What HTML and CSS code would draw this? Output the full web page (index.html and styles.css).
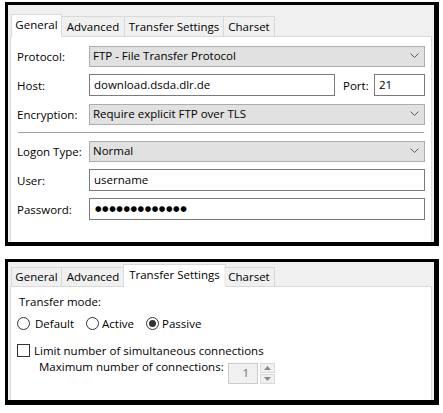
FILE: index.html
```html
<!DOCTYPE html>
<html>
<head>
<meta charset="utf-8">
<link rel="stylesheet" href="styles.css">
</head>
<body>
<div class="shot shot-top">
  <div class="tabs">
    <div class="tab sel w-gen">General</div>
    <div class="tab w-adv">Advanced</div>
    <div class="tab w-ts">Transfer Settings</div>
    <div class="tab w-cs">Charset</div>
  </div>
  <div class="panel panel-top">
    <div class="row">
      <span class="lbl">Protocol:</span>
      <div class="combo grow"><span>FTP - File Transfer Protocol</span><svg class="chev" width="9" height="5" viewBox="0 0 9 5"><path d="M0.5 0.5 L4.5 4.5 L8.5 0.5" stroke="#5a5a5a" fill="none"/></svg></div>
    </div>
    <div class="row">
      <span class="lbl">Host:</span>
      <div class="edit host">download.dsda.dlr.de</div>
      <span class="lbl port-lbl">Port:</span>
      <div class="edit port">21</div>
    </div>
    <div class="row">
      <span class="lbl">Encryption:</span>
      <div class="combo grow"><span>Require explicit FTP over TLS</span><svg class="chev" width="9" height="5" viewBox="0 0 9 5"><path d="M0.5 0.5 L4.5 4.5 L8.5 0.5" stroke="#5a5a5a" fill="none"/></svg></div>
    </div>
    <div class="sep"></div>
    <div class="row">
      <span class="lbl">Logon Type:</span>
      <div class="combo grow"><span>Normal</span><svg class="chev" width="9" height="5" viewBox="0 0 9 5"><path d="M0.5 0.5 L4.5 4.5 L8.5 0.5" stroke="#5a5a5a" fill="none"/></svg></div>
    </div>
    <div class="row">
      <span class="lbl">User:</span>
      <div class="edit grow">username</div>
    </div>
    <div class="row">
      <span class="lbl">Password:</span>
      <div class="edit grow"><span class="dots">●●●●●●●●●●●●●</span></div>
    </div>
  </div>
</div>

<div class="shot shot-bot">
  <div class="tabs">
    <div class="tab w-gen">General</div>
    <div class="tab w-adv">Advanced</div>
    <div class="tab sel w-ts">Transfer Settings</div>
    <div class="tab w-cs">Charset</div>
  </div>
  <div class="panel panel-bot">
    <div class="line mode">Transfer mode:</div>
    <div class="radios">
      <label class="radio r-def"><span class="circ"></span>Default</label>
      <label class="radio r-act"><span class="circ"></span>Active</label>
      <label class="radio r-pas"><span class="circ on"></span>Passive</label>
    </div>
    <label class="check"><span class="box"></span>Limit number of simultaneous connections</label>
    <div class="maxrow">
      <span class="maxlbl">Maximum number of connections:</span>
      <div class="spin">1</div>
      <div class="spinbtns">
        <div class="sbtn"><svg width="7" height="4" viewBox="0 0 7 4"><path d="M0 4 L3.5 0 L7 4 Z" fill="#8a8a8a"/></svg></div>
        <div class="sbtn"><svg width="7" height="4" viewBox="0 0 7 4"><path d="M0 0 L3.5 4 L7 0 Z" fill="#8a8a8a"/></svg></div>
      </div>
    </div>
  </div>
</div>
</body>
</html>
```

FILE: styles.css
```css
* { box-sizing: border-box; }
body {
  margin: 0;
  background: #fff;
  font-family: "Segoe UI", "Open Sans", "Noto Sans", sans-serif;
  font-size: 11.5px;
  color: #000;
}
.shot {
  margin-left: 5px;
  width: 434px;
  border: solid #000;
  border-width: 3px 5px 4px 3px;
  background: #f0f0f0;
  display: flex;
  flex-direction: column;
  padding: 0 2px;
}
.shot-top {
  margin-top: 2px;
  height: 244px;
  padding-top: 9px;
}
.shot-bot {
  margin-top: 13px;
  height: 146px;
  padding-top: 2px;
  border-bottom-width: 5px;
}
.tabs {
  display: flex;
  align-items: flex-end;
  height: 22px;
  padding-left: 1px;
  position: relative;
  z-index: 2;
}
.tab {
  height: 20px;
  border: 1px solid #d9d9d9;
  border-bottom: none;
  border-left: none;
  background: #f0f0f0;
  display: flex;
  align-items: center;
  justify-content: center;
  white-space: nowrap;
  padding-bottom: 1px;
}
.tab:first-child { border-left: 1px solid #d9d9d9; }
.shot-bot .tab { height: 19px; }
.tab.sel {
  background: #fff;
  height: 23px;
  margin-bottom: -1px;
  border-left: 1px solid #d9d9d9;
  padding-bottom: 3px;
}
.shot-bot .tab.sel { margin-left: -2px; margin-right: -2px; height: 23px; }
.w-gen { width: 51px; }
.w-adv { width: 63px; }
.w-ts { width: 99px; }
.w-cs { width: 51px; }
.shot-bot .w-ts { width: 103px; }
.panel {
  flex: 1;
  background: #fff;
  border: 1px solid #d9d9d9;
  border-bottom: none;
}
.panel-top {
  padding: 8px 6px 0 6px;
  display: flex;
  flex-direction: column;
  gap: 7px;
}
.row {
  display: flex;
  align-items: center;
  height: 22px;
}
.lbl { width: 72px; flex: none; }
.grow { flex: 1; }
.combo {
  height: 21px;
  background: #e1e1e1;
  border: 1px solid #adadad;
  display: flex;
  align-items: center;
  justify-content: space-between;
  padding: 0 5px 1px 3px;
}
.chev { flex: none; }
.edit {
  height: 22px;
  background: #fff;
  border: 1px solid #7a7a7a;
  display: flex;
  align-items: center;
  padding: 0 4px 1px 4px;
}
.host { width: 246px; flex: none; }
.port-lbl { width: 31px; margin-left: 8px; }
.port { width: 51px; flex: none; }
.dots {
  font-family: "DejaVu Sans", sans-serif;
  font-size: 7.5px;
  letter-spacing: 0.55px;
  padding-left: 1px;
}
.sep {
  height: 1px;
  background: #a0a0a0;
  margin: 0 1px;
}
.panel-bot {
  padding: 7px 0 0 6px;
  display: flex;
  flex-direction: column;
}
.line { height: 16px; line-height: 16px; padding-left: 2px; }
.radios {
  display: flex;
  height: 16px;
  margin-top: 5px;
  align-items: center;
}
.radio {
  display: flex;
  align-items: center;
  gap: 5px;
}
.r-def { width: 69px; }
.r-act { width: 60px; gap: 3px; }
.r-pas { gap: 3px; }
.circ {
  width: 13px;
  height: 13px;
  border: 1px solid #333;
  border-radius: 50%;
  background: #fff;
  display: flex;
  align-items: center;
  justify-content: center;
}
.circ.on::after {
  content: "";
  width: 7px;
  height: 7px;
  border-radius: 50%;
  background: #333;
}
.check {
  display: flex;
  align-items: center;
  gap: 4px;
  height: 16px;
  margin-top: 11px;
}
.box {
  width: 13px;
  height: 13px;
  border: 1px solid #333;
  background: #fff;
}
.maxrow {
  display: flex;
  align-items: flex-start;
  margin-top: 1px;
  padding-left: 22px;
}
.maxlbl { width: 189px; flex: none; line-height: 16px; white-space: nowrap; }
.spin {
  margin-top: 4px;
  width: 30px;
  height: 21px;
  border: 1px solid #cccccc;
  background: #f0f0f0;
  color: #6d6d6d;
  text-align: right;
  padding-right: 8px;
  line-height: 18px;
}
.spinbtns {
  margin-top: 4px;
  margin-left: 2px;
  display: flex;
  flex-direction: column;
  gap: 1px;
}
.sbtn {
  width: 15px;
  height: 10px;
  border: 1px solid #dadada;
  background: #f0f0f0;
  display: flex;
  align-items: center;
  justify-content: center;
}
```
